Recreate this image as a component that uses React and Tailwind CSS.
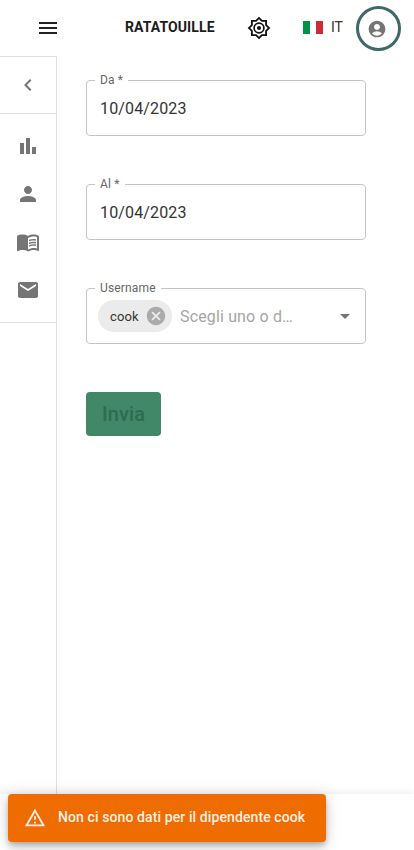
import {
  MdMenu, MdChevronLeft, MdPerson, MdEmail,
  MdCancel, MdArrowDropDown, MdAccountCircle,
} from "react-icons/md";

function BarChartIcon() {
  return (
    <svg viewBox="0 0 24 24" className="h-6 w-6 fill-current">
      <path d="M4 9h4v11H4zm12 4h4v7h-4zm-6-9h4v16h-4z" />
    </svg>
  );
}

function MenuBookIcon() {
  return (
    <svg viewBox="0 0 24 24" className="h-6 w-6 fill-current">
      <path fillRule="evenodd" d="M21 5c-1.11-.35-2.33-.5-3.5-.5-1.95 0-4.05.4-5.5 1.5-1.45-1.1-3.55-1.5-5.5-1.5S2.45 4.9 1 6v14.65c0 .25.25.5.5.5.1 0 .15-.05.25-.05C3.1 20.45 5.05 20 6.5 20c1.95 0 4.05.4 5.5 1.5 1.35-.85 3.8-1.5 5.5-1.5 1.65 0 3.35.3 4.75 1.05.1.05.15.05.25.05.25 0 .5-.25.5-.5V6c-.6-.45-1.25-.75-2-1zm0 13.5c-1.1-.35-2.3-.5-3.5-.5-1.7 0-4.15.65-5.5 1.5V8c1.35-.85 3.8-1.5 5.5-1.5 1.2 0 2.4.15 3.5.5v11.5z" />
      <path d="M17.5 10.5c.88 0 1.73.09 2.5.26V9.24c-.79-.15-1.64-.24-2.5-.24-1.7 0-3.24.29-4.5.83v1.66c1.13-.64 2.7-.99 4.5-.99zM13 12.49v1.66c1.13-.64 2.7-.99 4.5-.99.88 0 1.73.09 2.5.26V11.9c-.79-.15-1.64-.24-2.5-.24-1.7 0-3.24.3-4.5.83zM17.5 14.33c-1.7 0-3.24.29-4.5.83v1.66c1.13-.64 2.7-.99 4.5-.99.88 0 1.73.09 2.5.26v-1.52c-.79-.16-1.64-.24-2.5-.24z" />
    </svg>
  );
}

function BrightnessIcon() {
  return (
    <svg viewBox="0 0 24 24" className="h-6 w-6 fill-current">
      <path fillRule="evenodd" d="M20 8.69V4h-4.69L12 .69 8.69 4H4v4.69L.69 12 4 15.31V20h4.69L12 23.31 15.31 20H20v-4.69L23.31 12 20 8.69zM18.2 14.6v3.6h-3.6L12 20.8 9.4 18.2H5.8v-3.6L3.2 12l2.6-2.6V5.8h3.6L12 3.2l2.6 2.6h3.6v3.6l2.6 2.6z" />
      <circle cx="12" cy="12" r="4.9" fill="none" stroke="currentColor" strokeWidth="1.7" />
      <circle cx="12" cy="12" r="2" />
    </svg>
  );
}

function WarningIcon() {
  return (
    <svg viewBox="0 0 24 24" className="h-[22px] w-[22px] fill-current">
      <path d="M12 5.99L19.53 19H4.47L12 5.99M12 2L1 21h22L12 2zm1 14h-2v2h2v-2zm0-6h-2v4h2v-4z" />
    </svg>
  );
}

function Field({ label, className = "", children }) {
  return (
    <fieldset className={"h-[61px] w-[280px] min-w-0 rounded border border-[#c4c4c4] px-2 " + className}>
      <legend className="h-[11px] px-[5px] text-xs leading-[11px] tracking-[0.15px] text-[#666]">
        {label}
      </legend>
      {children}
    </fieldset>
  );
}

function DateValue({ children }) {
  return (
    <div className="flex h-[49px] items-center pb-[3px] pl-[5px] text-base tracking-[0.15px] text-[#333]">
      {children}
    </div>
  );
}

export default function App() {
  return (
    <div className="flex h-[850px] w-[414px] flex-col overflow-hidden bg-white font-['Roboto',sans-serif]">
      <header className="flex h-14 shrink-0 items-center">
        <MdMenu className="ml-9 h-6 w-6 text-[#222]" />
        <h1 className="ml-[65px] w-[91px] whitespace-nowrap pb-0.5 text-sm font-bold tracking-[0.1px] text-[#1c1c1c]">RATATOUILLE</h1>
        <div className="ml-[31px] text-[#111]"><BrightnessIcon /></div>
        <div className="mb-px ml-8 flex h-[13px] w-5">
          <span className="w-[7px] bg-[#009246]" />
          <span className="w-1.5 bg-white" />
          <span className="w-[7px] bg-[#ce2b37]" />
        </div>
        <span className="ml-2 w-[13px] pb-0.5 text-sm text-[#333]">IT</span>
        <div className="ml-3 flex h-[45px] w-[45px] items-center justify-center rounded-full border-[3px] border-[#3f6866] pr-[3px] pt-0.5">
          <MdAccountCircle className="h-5 w-5 text-[#757575]" />
        </div>
      </header>

      <div className="flex h-[738px] shrink-0">
        <nav className="w-[57px] shrink-0 border-r border-t border-[#e0e0e0] text-[#757575]">
          <div className="flex h-[57px] items-center justify-center border-b border-[#e0e0e0]">
            <MdChevronLeft className="h-6 w-6" />
          </div>
          <div className="flex h-[209px] flex-col items-center border-b border-[#e0e0e0] pt-2">
            <span className="flex h-12 items-center"><BarChartIcon /></span>
            <span className="flex h-12 items-center"><MdPerson className="h-6 w-6" /></span>
            <span className="flex h-12 items-center"><MenuBookIcon /></span>
            <span className="flex h-12 items-center"><MdEmail className="h-6 w-6" /></span>
          </div>
        </nav>

        <main className="pl-[29px] pt-[19px]">
          <Field label="Da *"><DateValue>10/04/2023</DateValue></Field>
          <Field label="Al *" className="mt-[43px]"><DateValue>10/04/2023</DateValue></Field>
          <Field label="Username" className="mt-[43px]">
            <div className="flex h-[49px] items-center pb-[5px] pl-[3px]">
              <div className="flex h-8 w-[74px] items-center rounded-full bg-[#ebebeb] pl-3 text-[13px] text-[#333]">
                <span className="w-[35px] pt-px tracking-[0.1px]">cook</span>
                <MdCancel className="h-[22px] w-[22px] text-[#ababab]" />
              </div>
              <span className="ml-2 w-[114px] whitespace-nowrap pt-0.5 text-base tracking-[0.15px] text-[#a5a5a5]">Scegli uno o d…</span>
              <MdArrowDropDown className="ml-[39px] h-6 w-6 shrink-0 text-[#757575]" />
            </div>
          </Field>
          <button className="mt-12 flex h-11 w-[75px] items-center justify-center rounded bg-[#408867] text-xl font-medium tracking-[0.1px] text-[#2e6b50]">
            Invia
          </button>
        </main>
      </div>

      <footer className="h-14 shrink-0 bg-white pl-2 shadow-[0_-1px_8px_rgba(0,0,0,0.08)]">
        <div role="alert" className="flex h-12 w-[318px] items-center rounded bg-[#ef6c00] pl-4 text-[#fff0e5] shadow-[0px_3px_5px_-1px_rgba(0,0,0,0.2),0px_6px_10px_0px_rgba(0,0,0,0.14),0px_1px_18px_0px_rgba(0,0,0,0.12)]">
          <WarningIcon />
          <span className="ml-3 whitespace-nowrap pb-0.5 text-sm font-medium tracking-[0.1px]">
            Non ci sono dati per il dipendente cook
          </span>
        </div>
      </footer>
    </div>
  );
}
